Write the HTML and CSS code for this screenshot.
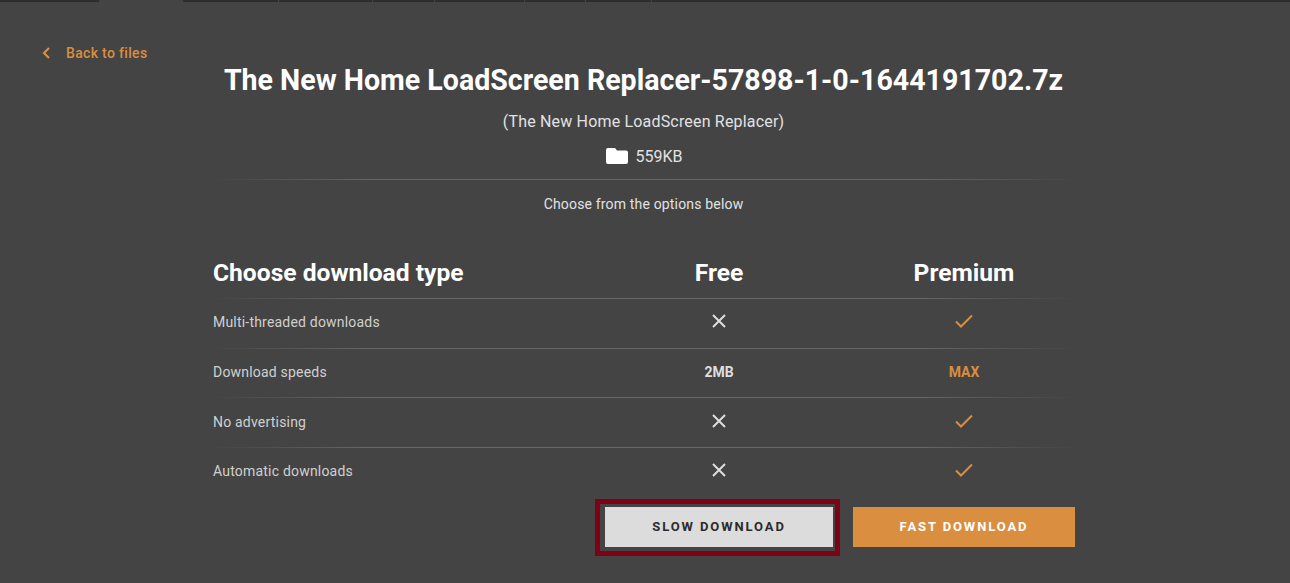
FILE: index.html
```html
<!DOCTYPE html>
<html lang="en">
<head>
<meta charset="utf-8">
<title>Download</title>
<link rel="stylesheet" href="styles.css">
</head>
<body>
<div class="tabs">
  <span class="tab t1"></span><span class="tab t2 active"></span><span class="tab t3"></span><span class="tab t4"></span><span class="tab t5"></span><span class="tab t6"></span><span class="tab t7"></span><span class="tab t8"></span><span class="tab t9"></span>
</div>
<main class="page">
  <a class="back" href="#">
    <svg class="back-icon" viewBox="0 0 9 12" width="9" height="12"><path d="M7 1 L2 6 L7 11" fill="none" stroke="#d98e40" stroke-width="2.2"/></svg>
    <span>Back to files</span>
  </a>
  <h1 class="title">The New Home LoadScreen Replacer-57898-1-0-1644191702.7z</h1>
  <p class="subtitle">(The New Home LoadScreen Replacer)</p>
  <div class="size">
    <svg class="folder" viewBox="0 0 22 16" width="22" height="16"><path d="M2 0 H9 L11 2.5 H20 A2 2 0 0 1 22 4.5 V14 A2 2 0 0 1 20 16 H2 A2 2 0 0 1 0 14 V2 A2 2 0 0 1 2 0 Z" fill="#fff"/></svg>
    <span>559KB</span>
  </div>
  <div class="rule"></div>
  <p class="choose">Choose from the options below</p>
  <section class="compare">
    <div class="row head">
      <h2 class="head-label">Choose download type</h2>
      <div class="cell head-cell">Free</div>
      <div class="cell head-cell">Premium</div>
    </div>
    <div class="row body">
      <div class="label">Multi-threaded downloads</div>
      <div class="cell"><svg class="ico" viewBox="0 0 14 14" width="14" height="14"><path d="M1 1 L13 13 M13 1 L1 13" stroke="#dedede" stroke-width="2" fill="none"/></svg></div>
      <div class="cell"><svg class="ico" viewBox="0 0 18 14" width="18" height="14"><path d="M1 7.5 L6 12.5 L17 1.5" stroke="#d98e40" stroke-width="2" fill="none"/></svg></div>
    </div>
    <div class="row body">
      <div class="label">Download speeds</div>
      <div class="cell val">2MB</div>
      <div class="cell val max">MAX</div>
    </div>
    <div class="row body">
      <div class="label">No advertising</div>
      <div class="cell"><svg class="ico" viewBox="0 0 14 14" width="14" height="14"><path d="M1 1 L13 13 M13 1 L1 13" stroke="#dedede" stroke-width="2" fill="none"/></svg></div>
      <div class="cell"><svg class="ico" viewBox="0 0 18 14" width="18" height="14"><path d="M1 7.5 L6 12.5 L17 1.5" stroke="#d98e40" stroke-width="2" fill="none"/></svg></div>
    </div>
    <div class="row body">
      <div class="label">Automatic downloads</div>
      <div class="cell"><svg class="ico" viewBox="0 0 14 14" width="14" height="14"><path d="M1 1 L13 13 M13 1 L1 13" stroke="#dedede" stroke-width="2" fill="none"/></svg></div>
      <div class="cell"><svg class="ico" viewBox="0 0 18 14" width="18" height="14"><path d="M1 7.5 L6 12.5 L17 1.5" stroke="#d98e40" stroke-width="2" fill="none"/></svg></div>
    </div>
    <div class="row actions">
      <div></div>
      <button class="btn slow" type="button">SLOW DOWNLOAD</button>
      <button class="btn fast" type="button">FAST DOWNLOAD</button>
    </div>
  </section>
</main>
</body>
</html>
```
FILE: styles.css
```css
* { box-sizing: border-box; }
html, body { margin: 0; height: 100%; }
body {
  background: #444444;
  color: #fff;
  font-family: Roboto, "Liberation Sans", sans-serif;
  overflow: hidden;
}
.tabs { display: flex; height: 2px; background: #2d2d2d; }
.tab { display: block; height: 2px; border-right: 1px solid #444; }
.t1 { width: 99px; border-right: 0; }
.t2 { width: 84px; border-right: 0; }
.active { background: #444; }
.t3 { width: 96px; }
.t4 { width: 94px; }
.t5 { width: 62px; }
.t6 { width: 90px; }
.t7 { width: 61px; }
.t8 { width: 66px; }
.t9 { flex: 1; border-right: 0; }
.page { position: relative; padding-top: 60px; }
.back {
  position: absolute;
  left: 42px;
  top: 43px;
  display: flex;
  align-items: center;
  gap: 15px;
  color: #d98e40;
  font-size: 14px;
  font-weight: 500;
  letter-spacing: 0.33px;
  line-height: 16px;
  text-decoration: none;
}
.title {
  margin: 0;
  padding-right: 3px;
  font-size: 28.57px;
  font-weight: 700;
  line-height: 36px;
  text-align: center;
  color: #fff;
}
.subtitle {
  margin: 13px 0 0;
  padding-right: 3px;
  font-size: 16px;
  letter-spacing: 0.18px;
  line-height: 22px;
  text-align: center;
  color: #e2e2e2;
}
.size {
  margin-top: 13px;
  padding-right: 2px;
  display: flex;
  justify-content: center;
  align-items: center;
  gap: 8px;
  font-size: 16px;
  line-height: 22px;
  color: #e2e2e2;
}
.folder { display: block; margin-top: -2px; }
.rule {
  width: 863px;
  height: 1px;
  margin: 11px auto 0;
  background: linear-gradient(90deg, #444 0%, #666 18%, #666 82%, #444 100%);
}
.choose {
  margin: 15px 0 0;
  padding-right: 3px;
  font-size: 14px;
  letter-spacing: 0.17px;
  line-height: 18px;
  text-align: center;
  color: #e2e2e2;
}
.compare { margin: 35px 0 0 212px; width: 863px; }
.row {
  display: grid;
  grid-template-columns: 373px 228px 222px;
  column-gap: 20px;
  align-items: center;
}
.head { height: 50px; padding-bottom: 2px; }
.head-label { margin: 0; padding: 2px 0 0 1px; font-size: 24.6px; font-weight: 700; color: #fff; line-height: 30px; }
.head-cell { font-size: 24.6px; font-weight: 700; color: #fff; }
.cell { display: flex; justify-content: center; align-items: center; }
.body {
  height: 49.67px;
  border-top: 1px solid #666;
  border-image: linear-gradient(90deg, #444 0%, #666 18%, #666 82%, #444 100%) 1;
}
.label { padding: 0 0 2px 1px; font-size: 14px; letter-spacing: 0.2px; color: #d0d0d0; }
.ico { display: block; margin-bottom: 4px; }
.val { padding-bottom: 2px; font-size: 14px; font-weight: 700; color: #dedede; }
.max { color: #d98e40; }
.actions { margin-top: 10px; height: 40px; }
.btn {
  position: relative;
  height: 40px;
  border: 0;
  padding: 0;
  font-family: inherit;
  font-size: 13px;
  font-weight: 700;
  letter-spacing: 1.9px;
  border-radius: 0;
}
.slow {
  background: #dcdcdc;
  color: #2b2b2b;
}
.slow::after {
  content: "";
  position: absolute;
  left: -10px;
  right: -7px;
  top: -8px;
  bottom: -9px;
  border: 5px solid #800014;
}
.fast { background: #d98e40; color: #fff; }
```
